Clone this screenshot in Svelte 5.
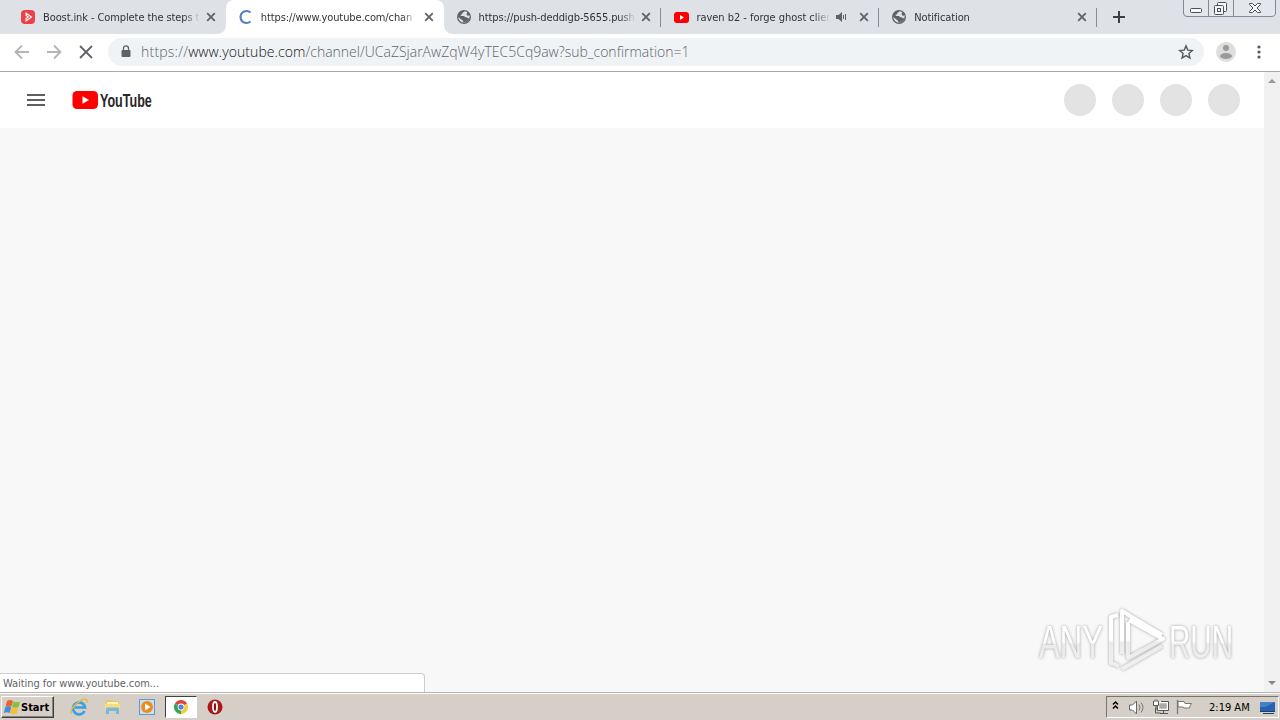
<script>
  const tabs = [
    { title: 'Boost.ink - Complete the steps t', icon: 'boost' },
    { title: 'https://www.youtube.com/chan', icon: 'spinner', active: true },
    { title: 'https://push-deddigb-5655.push', icon: 'globe', line: true },
    { title: 'raven b2 - forge ghost clien', icon: 'youtube', audio: true, line: true },
    { title: 'Notification', icon: 'globe', line: true },
  ];
  const avatars = [1, 2, 3, 4];
</script>

{#snippet favicon(name)}
  <svg class="favicon" width="16" height="16" viewBox="0 0 16 16">
    {#if name === 'boost'}
      <rect x="0" y="1" width="14" height="14" rx="4" fill="#ee3f48" />
      <path d="M5 6.500V4l5.500 4L5 12V9.500L7.300 8z" fill="none" stroke="#fff" stroke-width="1.100" />
    {:else if name === 'spinner'}
      <path d="M11.500 3.500A6 6 0 1 0 11.500 12.500" fill="none" stroke="#557fc2" stroke-width="2.200" />
    {:else if name === 'youtube'}
      <rect x="0" y="3" width="15" height="11" rx="3" fill="#f00" />
      <path d="M6 6v5l4-2.500z" fill="#fff" />
    {:else}
      <circle cx="7" cy="8" r="7" fill="#5f6368" />
      <path d="M7.500 2.200C7 3.500 5.500 3 5.200 4.500 5 5.800 3.500 5.500 3.500 6.800c1.500.6 3-.3 4.300 1 .8 1 2 .3 3 1.300.7 1-.6 2.200-1.800 2.400-.6 1-1.300 2-2.800 2.100.4-1.600-.5-2.300-1.500-2.800L1.300 8A5.700 5.700 0 0 0 7 13.700 5.700 5.700 0 0 0 12.700 8c0-.6-.1-1.200-.3-1.700-1 .8-2.300.4-2.700-.5C9.300 4.800 10 4 10.300 3.300 9.500 2.600 8.500 2.300 7.500 2.200z" fill="#dee1e6" />
      <path d="M7 13.700A5.700 5.700 0 0 0 12.700 8l-1.500 1.500L9 11.500z" fill="#5f6368" />
    {/if}
  </svg>
{/snippet}

<div class="screen">
  <div class="strip">
    {#each tabs as tab}
      <div class="tab" class:active={tab.active} class:line={tab.line}>
        {@render favicon(tab.icon)}
        <span class="title" class:short={tab.audio}>{tab.title}</span>
        {#if tab.audio}
          <svg class="audio" width="12" height="12" viewBox="0 0 12 12"><path d="M0 4h2.500L6 1v10L2.500 8H0z" fill="#5f6368" /><path d="M7.500 4v4M9.500 3v6" stroke="#5f6368" /></svg>
        {/if}
        <svg class="close" width="10" height="10" viewBox="0 0 10 10"><path d="M1.200 1.200l7.600 7.600M8.800 1.200L1.200 8.800" stroke="#5f6368" stroke-width="1.800" /></svg>
      </div>
    {/each}
    <svg class="plus" width="12" height="12" viewBox="0 0 12 12"><path d="M6 0v12M0 6h12" stroke="#3c4043" stroke-width="2" /></svg>
    <svg class="winbtns" width="95" height="18" viewBox="0 0 95 18">
      <path d="M.5-2V13q0 3.500 3.500 3.500H88q4.500 0 4.500-3.500V-2M25.500 0v16M50.500 0v16" fill="#e3e6eb" stroke="#85898f" />
      <g fill="#f5f6f8" stroke="#4c5159">
        <rect x="7.500" y="8.500" width="11" height="4" rx="1" />
        <rect x="34.500" y="2.500" width="9" height="9" rx="1" />
        <rect x="31.500" y="5.500" width="9" height="9" rx="1" />
        <rect x="34.500" y="8.500" width="3" height="3" />
        <path d="M66.500 3.500h3l2.500 2.500 2.500-2.500h3v1L74 8l3.500 3.500v1h-3L72 10l-2.500 2.500h-3v-1L70 8l-3.500-3.500z" />
      </g>
    </svg>
  </div>

  <div class="toolbar">
    <svg class="nav" width="100" height="16" viewBox="0 0 100 16" fill="none" stroke-width="1.800">
      <path d="M15 8H2M8 1.500L1.500 8 8 14.500M33 8h13M40 1.500L46.500 8 40 14.500" stroke="#b3b5b8" />
      <path d="M66 2l12 12M78 2L66 14" stroke="#5f6368" />
    </svg>
    <div class="omnibox">
      <svg class="lock" width="10" height="14" viewBox="0 0 10 14"><rect x="0.500" y="5" width="9" height="7" rx="1" fill="#5f6368" /><path d="M2.500 6V3.300a2.500 2.500 0 0 1 5 0V6" fill="none" stroke="#5f6368" stroke-width="1.300" /></svg>
      <span class="url"><span class="scheme">https://</span><span class="host">www.youtube.com</span><span class="path">/channel/UCaZSjarAwZqW4yTEC5Cq9aw?sub_confirmation=1</span></span>
      <svg class="star" width="16" height="16" viewBox="0 0 16 16"><path d="M8 1.900l1.800 4.200 4.500.4-3.400 3 1 4.500L8 11.600l-3.900 2.400 1-4.500-3.400-3 4.500-.4z" fill="none" stroke="#55595e" stroke-width="1.400" /></svg>
    </div>
    <svg class="profile" width="20" height="20" viewBox="0 0 20 20"><circle cx="10" cy="10" r="10" fill="#dedede" /><circle cx="10" cy="6" r="3" fill="#9b9b9b" /><ellipse cx="10" cy="14" rx="6" ry="3" fill="#9b9b9b" /></svg>
    <svg class="dots" width="4" height="14" viewBox="0 0 4 14" fill="#55595e"><circle cx="2" cy="2" r="1.600" /><circle cx="2" cy="7" r="1.600" /><circle cx="2" cy="12" r="1.600" /></svg>
  </div>

  <div class="viewport">
    <div class="page">
      <header>
        <svg class="burger" width="18" height="12" viewBox="0 0 18 12"><path d="M0 1h18M0 6h18M0 11h18" stroke="#606060" stroke-width="2" /></svg>
        <svg class="logo" width="82" height="20" viewBox="0 0 82 20">
          <rect x="0.500" y="1" width="25.500" height="18" rx="4.500" fill="#f00" />
          <path d="M10.500 6.200v7.600L17 10z" fill="#fff" />
          <text transform="translate(28 16.500) scale(.72 1)" textLength="72" lengthAdjust="spacingAndGlyphs">YouTube</text>
        </svg>
        <div class="avatars">
          {#each avatars as a (a)}<i></i>{/each}
        </div>
      </header>
    </div>
    <div class="scrollbar">
      <svg width="8" height="4" viewBox="0 0 8 4"><path d="M0 4l4-4 4 4z" fill="#999" /></svg>
      <svg width="8" height="4" viewBox="0 0 8 4"><path d="M0 0l4 4 4-4z" fill="#888" /></svg>
    </div>
    <div class="status">Waiting for www.youtube.com...</div>
    <svg class="watermark" width="220" height="76" viewBox="0 0 220 76">
      <defs>
        <linearGradient id="fade" x1="0" y1="0" x2="0" y2="1">
          <stop offset="0" stop-color="#fff" /><stop offset=".5" stop-color="#fff" />
          <stop offset=".54" stop-color="#ebebeb" /><stop offset="1" stop-color="#f1f1f1" />
        </linearGradient>
      </defs>
      <g class="mark">
        <text x="8" y="54" textLength="64" lengthAdjust="spacingAndGlyphs">ANY</text>
        <text x="138" y="54" textLength="64" lengthAdjust="spacingAndGlyphs">RUN</text>
        <g fill="none" stroke="url(#fade)" stroke-width="4" stroke-linejoin="round">
          <path d="M87 11l-7 2v46l8 3M91 50V7l40 24M97 18v36l35-19-34-19M91 65l40-23" />
        </g>
      </g>
    </svg>
  </div>

  <div class="taskbar">
    <div class="start">
      <svg width="17" height="16" viewBox="0 0 17 16">
        <path d="M3 2q3-2 6 0L7.500 7.500q-3-1.500-6 0z" fill="#e9632d" />
        <path d="M9.500 2.500q3 1.500 6.500 0L14.500 8q-3 1.500-6.500 0z" fill="#8abd3d" />
        <path d="M1.300 8q3-1.800 6 0L5.800 14q-3-1.500-6 0z" fill="#4a8bd6" />
        <path d="M7.800 8.500q3 1.500 6.500 0l-1.500 6q-3 1.500-6.500 0z" fill="#f5bf32" />
      </svg>
      <b>Start</b>
    </div>
    <div class="quick">
      <span class="app"><svg width="18" height="18" viewBox="0 0 18 18">
        <path d="M14.500 13A6 6 0 1 1 15 9.500H5" fill="none" stroke="#3aa0df" stroke-width="2.700" />
        <path d="M1.500 15.500C-1 11 11-.5 16.500 1.500c1 .6.700 2 0 3" fill="none" stroke="#e6b93a" stroke-width="1.400" />
      </svg></span>
      <span class="app"><svg width="18" height="18" viewBox="0 0 18 18">
        <path d="M2 2h5l1 1h7v10H2z" fill="#e9c75b" /><path d="M3 4h11v3H3z" fill="#fff3b5" />
        <path d="M1 6h15v6H1z" fill="#f5dc83" /><path d="M2 16v-5q0-1.500 1.500-1.500h10Q15 9.500 15 11v5h-3v-3H5v3z" fill="#76b9dc" />
      </svg></span>
      <span class="app"><svg width="18" height="18" viewBox="0 0 18 18">
        <rect x="1.500" y="1.500" width="15" height="15" fill="#c8e0f3" stroke="#5b9bd0" />
        <circle cx="9" cy="9" r="6" fill="#f08a1c" /><path d="M7 5.500v7L12.500 9z" fill="#fff" />
      </svg></span>
      <span class="app pressed"><svg width="16" height="16" viewBox="0 0 16 16">
        <path d="M8 8L1.900 4.500A7 7 0 0 1 14.100 4.500z" fill="#de4436" />
        <path d="M8 8l6.100-3.500A7 7 0 0 1 8 15z" fill="#f7cb3b" />
        <path d="M8 8v7A7 7 0 0 1 1.900 4.500z" fill="#3aa257" />
        <circle cx="8" cy="8" r="3.400" fill="#fff" /><circle cx="8" cy="8" r="2.600" fill="#4a86dd" />
      </svg></span>
      <span class="app"><svg width="16" height="16" viewBox="0 0 16 16">
        <circle cx="8" cy="8" r="7.500" fill="#a81919" /><ellipse cx="8" cy="8" rx="2" ry="5" fill="#8a0f0f" stroke="#fff" stroke-width="1.800" />
      </svg></span>
    </div>
    <div class="tray">
      <svg width="82" height="18" viewBox="0 0 82 18" fill="none">
        <path d="M1 6.500L3.500 4 6 6.500M1 10.500L3.500 8 6 10.500" stroke="#000" stroke-width="1.500" />
        <path d="M17.500 7v5h3l4 4V3l-4 4z" fill="#fff" stroke="#666" />
        <path d="M27 6.500q2 3 0 6M29 4.500q4 5 0 10" stroke="#777" />
        <path d="M46.500 4.500h9v7h-9z" fill="#aaa" stroke="#fff" stroke-width="1.500" />
        <path d="M45.500 8v4.500h11v-9H49M51.500 13v2M48 15.500h8M43.500 10v5h5" stroke="#555" />
        <path d="M41.500 3v4.500h5V3M43 1.500V4M45 1.500V4M44 8v4" stroke="#555" fill="#fff" />
        <path d="M66 3.500h6l1 2h6.500q-2 3-2 4.500H72l-1-1h-5z" fill="#fff" stroke="#777" />
        <path d="M65.500 2v14" stroke="#777" stroke-width="1.300" />
      </svg>
      <time>2:19 AM</time>
      <svg class="desktop" width="16" height="14" viewBox="0 0 16 14"><path d="M0 2h15v9H0z" fill="#2863b0" /><path d="M0 2h15L5 7H0z" fill="#4580c8" /><path d="M0 11h15v1H0zM3 13h11v1H3z" fill="#253f63" /></svg>
    </div>
  </div>
</div>

<style>
  :global(body) { margin: 0; overflow: hidden; }
  .screen { width: 1280px; height: 720px; display: flex; flex-direction: column; overflow: hidden; background: #fff;
    font: 11px/14px 'DejaVu Sans Condensed', 'DejaVu Sans', sans-serif; font-stretch: condensed; color: #3c4043; }
  svg { display: block; flex: none; }

  .strip { position: relative; height: 34px; display: flex; background: #dee1e6; padding-left: 8px; box-sizing: border-box; }
  .tab { position: relative; width: 217.800px; height: 34px; flex: none; display: flex; align-items: center; padding: 0 10px 0 13px; box-sizing: border-box; }
  .tab.active { background: #fff; border-radius: 8px 8px 0 0; }
  .tab.active::before, .tab.active::after { content: ''; position: absolute; bottom: 0; width: 8px; height: 8px; }
  .tab.active::before { left: -8px; background: radial-gradient(circle at 0 0, transparent 7.500px, #fff 8px); }
  .tab.active::after { right: -8px; background: radial-gradient(circle at 100% 0, transparent 7.500px, #fff 8px); }
  .tab.line::after { content: ''; position: absolute; right: 0; top: 8px; width: 1px; height: 19px; background: #888c92; }
  .favicon { margin-right: 6px; }
  .title { width: 157px; padding-top: 1px; overflow: hidden; white-space: nowrap; letter-spacing: -.1px; color: #303438;
    mask-image: linear-gradient(90deg, #000 calc(100% - 16px), transparent); }
  .title.short { width: 134px; letter-spacing: -.03px; }
  .audio { margin-left: 6px; }
  .close { margin-left: auto; }
  .plus { margin: 11px 0 0 16px; }
  .winbtns { position: absolute; left: 1183px; top: 0; }

  .toolbar { height: 38px; display: flex; align-items: center; box-sizing: border-box; border-bottom: 1px solid #aaa; padding: 0 0 1px 14px; }
  .nav { margin-right: -6px; }
  .omnibox { width: 1096px; height: 28px; border-radius: 14px; background: #f0f3f5; display: flex; align-items: center; box-sizing: border-box; padding: 0 10px 0 13px; }
  .url { margin-left: 10px; font: 300 14px/20px 'Open Sans', sans-serif; white-space: nowrap; color: #5f6368; }
  .scheme { letter-spacing: .22px; }
  .host { color: #111; letter-spacing: .08px; }
  .star { margin-left: auto; }
  .profile { margin-left: 12px; }
  .dots { margin-left: 21px; }

  .viewport { position: relative; flex: 1; display: flex; min-height: 0; }
  .page { flex: 1; background: #f8f8f8; }
  header { height: 56px; background: #fff; display: flex; align-items: center; padding: 0 24px 0 27px; }
  .logo { margin-left: 27px; }
  .logo text { font: 700 18.500px 'Liberation Sans', sans-serif; fill: #282828; }
  .avatars { margin-left: auto; display: flex; gap: 16px; }
  .avatars i { width: 32px; height: 32px; border-radius: 50%; background: #e3e3e3; }
  .scrollbar { width: 16px; background: #f1f1f1; display: flex; flex-direction: column; justify-content: space-between; align-items: center; padding: 7px 0; box-sizing: border-box; }
  .status { position: absolute; left: 0; bottom: 0; width: 425px; height: 19px; box-sizing: border-box; padding: 3px 3px 0; background: #fff;
    border: solid #ccc; border-width: 1px 1px 0 0; border-radius: 0 4px 0 0; color: #5f6368; letter-spacing: -.06px; }
  .watermark { position: absolute; left: 1031px; top: 532px; }
  .mark { filter: drop-shadow(0 0 1.500px rgba(0, 0, 0, .35)); }
  .mark text { font: 46px 'Liberation Sans', sans-serif; fill: url(#fade); }

  .taskbar { height: 28px; display: flex; align-items: center; box-sizing: border-box; background: #d6cfc7; border-top: 1px solid #b9b5ae; box-shadow: inset 0 1px #fff; padding: 1px 1px 0; }
  .start { width: 53px; height: 22px; box-sizing: border-box; display: flex; align-items: center; padding-left: 2px;
    border: 1px solid; border-color: #fff #404040 #404040 #fff; box-shadow: inset -1px -1px #87827b; color: #000; }
  .start b { padding-top: 1px; }
  .quick { display: flex; margin-left: 9px; gap: 2px; }
  .app { width: 32px; height: 22px; display: flex; align-items: center; justify-content: center; box-sizing: border-box; }
  .app.pressed { background: #fff; border: 1px solid; border-color: #404040 #fff #fff #404040; }
  .tray { margin-left: auto; width: 173px; height: 22px; box-sizing: border-box; display: flex; align-items: center; padding-left: 5px;
    border: 1px solid; border-color: #77736d #fff #fff #77736d; color: #000; }
  time { margin-left: 15px; padding-top: 1px; white-space: nowrap; }
  .desktop { margin-left: auto; margin-right: 2px; }
</style>
